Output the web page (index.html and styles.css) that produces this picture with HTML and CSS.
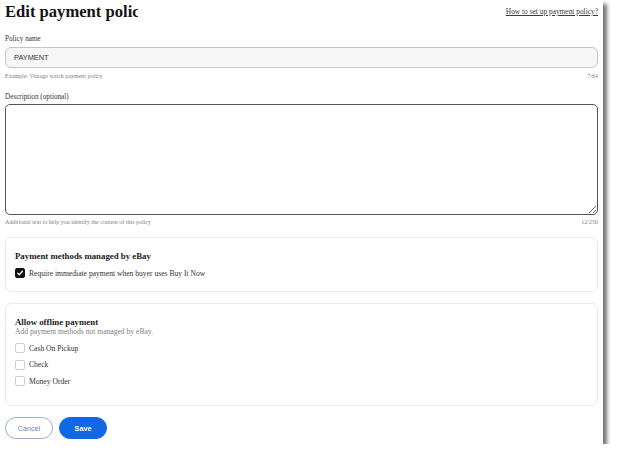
FILE: index.html
```html
<!DOCTYPE html>
<html>
<head>
<meta charset="utf-8">
<link rel="stylesheet" href="styles.css">
</head>
<body>
<div class="page">
  <div class="header">
    <h1 class="title">Edit payment policy</h1>
    <a class="help" href="#">How to set up payment policy?</a>
  </div>

  <label class="label label-first">Policy name</label>
  <div class="input">PAYMENT</div>
  <div class="hint-row">
    <span>Example: Vintage watch payment policy</span>
    <span>7/64</span>
  </div>

  <label class="label label-desc">Description (optional)</label>
  <textarea class="textarea"></textarea>
  <div class="hint-row">
    <span>Additional text to help you identify the content of this policy</span>
    <span>12/250</span>
  </div>

  <section class="card card-ebay">
    <h2 class="card-title">Payment methods managed by eBay</h2>
    <div class="option">
      <span class="box checked">
        <svg viewBox="0 0 10 10" width="8" height="8"><path d="M2 5.2 L4.1 7.2 L8 2.8" fill="none" stroke="#fff" stroke-width="1.6" stroke-linecap="round" stroke-linejoin="round"/></svg>
      </span>
      <span>Require immediate payment when buyer uses Buy It Now</span>
    </div>
  </section>

  <section class="card card-offline">
    <h2 class="card-title">Allow offline payment</h2>
    <div class="card-sub">Add payment methods not managed by eBay.</div>
    <div class="options">
      <div class="option"><span class="box"></span><span>Cash On Pickup</span></div>
      <div class="option"><span class="box"></span><span>Check</span></div>
      <div class="option"><span class="box"></span><span>Money Order</span></div>
    </div>
  </section>

  <div class="actions">
    <button class="btn btn-cancel">Cancel</button>
    <button class="btn btn-save">Save</button>
  </div>
</div>
</body>
</html>
```

FILE: styles.css
```css
* { box-sizing: border-box; }

html, body {
  margin: 0;
  padding: 0;
  background: #ffffff;
}

body {
  font-family: "Liberation Serif", "Times New Roman", serif;
  color: #333;
}

.page {
  width: 603px;
  height: 444px;
  background: #fff;
  padding: 0 5px;
  box-shadow: 4px 4px 4px rgba(0, 0, 0, 0.55);
  display: flex;
  flex-direction: column;
}

.header {
  height: 32px;
  display: flex;
  justify-content: space-between;
  align-items: flex-start;
}

.title {
  margin: 0;
  width: 133px;
  overflow: hidden;
  white-space: nowrap;
  font-size: 16.6px;
  line-height: 24px;
  font-weight: bold;
  color: #141414;
}

.help {
  margin-top: 7px;
  font-size: 7.4px;
  line-height: 10px;
  color: #3a3a4a;
  text-decoration: underline;
}

.label {
  display: block;
  font-size: 7.2px;
  line-height: 10px;
  color: #333;
}

.label-first { margin-top: 2px; }
.label-desc { margin-top: 11px; }

.input {
  margin-top: 3px;
  height: 21px;
  border: 1px solid #c4c4c4;
  border-radius: 6px;
  background: #f6f6f6;
  padding-left: 8px;
  display: flex;
  align-items: center;
  font-family: "Liberation Sans", Arial, sans-serif;
  font-size: 7.4px;
  color: #333;
}

.hint-row {
  margin-top: 3px;
  display: flex;
  justify-content: space-between;
  font-size: 6px;
  line-height: 10px;
  color: #808080;
}

.textarea {
  display: block;
  margin-top: 2px;
  width: 100%;
  height: 111px;
  border: 1.5px solid #555;
  border-radius: 5px;
  background: #fff;
  resize: vertical;
  outline: none;
}

.textarea + .hint-row { margin-top: 2px; }

.card {
  border: 1px solid #ececec;
  border-radius: 6px;
  padding: 13px 9px 0 9px;
}

.card-ebay {
  margin-top: 10px;
  height: 55px;
}

.card-offline {
  margin-top: 11px;
  height: 103px;
}

.card-title {
  margin: 0;
  font-size: 8.8px;
  line-height: 10px;
  font-weight: bold;
  color: #1a1a1a;
}

.card-sub {
  font-size: 7.6px;
  line-height: 9px;
  color: #808080;
}

.options {
  margin-top: 7px;
  display: flex;
  flex-direction: column;
  gap: 6.5px;
}

.card-ebay .option { margin-top: 7px; }

.option {
  display: flex;
  align-items: center;
  gap: 4px;
  height: 10px;
  font-size: 7.6px;
  color: #333;
}

.box {
  width: 10px;
  height: 10px;
  border: 1px solid #cfcfcf;
  border-radius: 2px;
  background: #fff;
  display: flex;
  align-items: center;
  justify-content: center;
  flex: none;
}

.box.checked {
  background: #111;
  border-color: #111;
}

.actions {
  margin-top: 11px;
  display: flex;
  gap: 6px;
}

.btn {
  height: 22px;
  width: 48px;
  border-radius: 11px;
  font-family: "Liberation Sans", Arial, sans-serif;
  font-size: 7.2px;
  padding: 0;
  cursor: pointer;
}

.btn-cancel {
  background: #fff;
  border: 1px solid #9cb0d4;
  color: #6f86b4;
}

.btn-save {
  background: #1167e6;
  border: 1px solid #1167e6;
  color: #fff;
  font-weight: bold;
}
```
